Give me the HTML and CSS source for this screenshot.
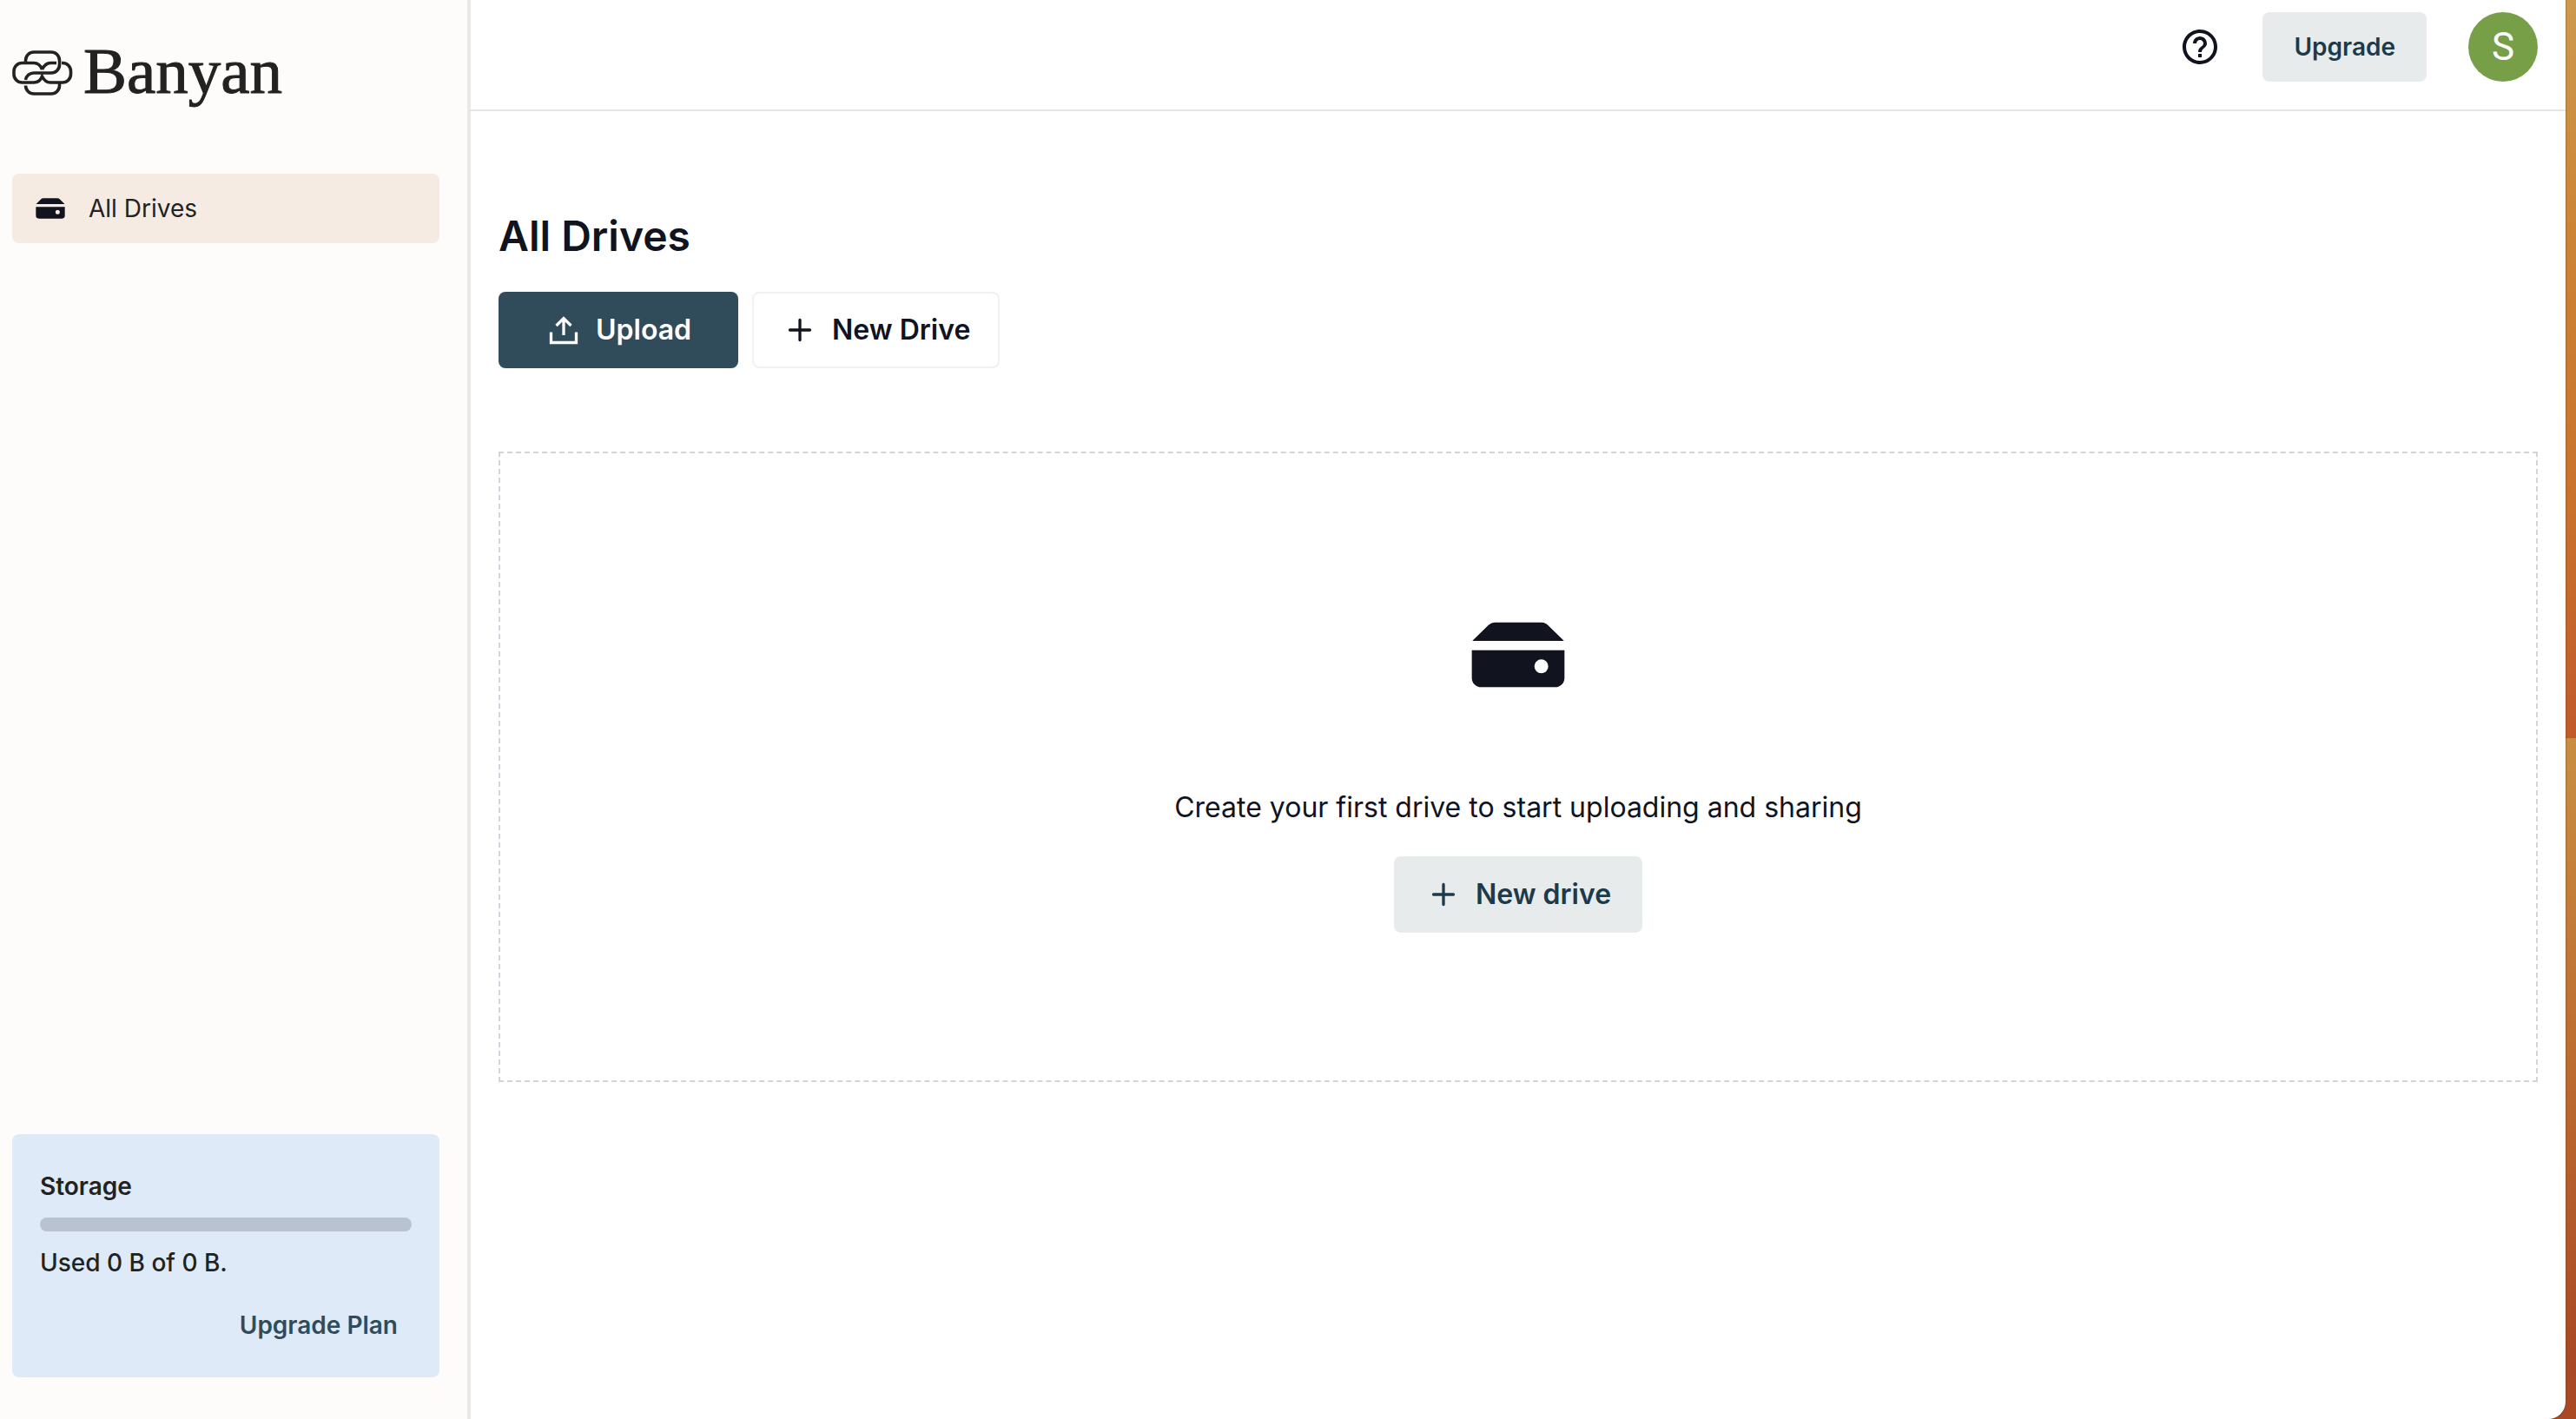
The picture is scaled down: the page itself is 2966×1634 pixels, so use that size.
FILE: index.html
```html
<!DOCTYPE html>
<html lang="en">
<head>
<meta charset="utf-8">
<title>Banyan - All Drives</title>
<link rel="stylesheet" href="styles.css">
</head>
<body>
<svg class="sprite" aria-hidden="true">
  <symbol id="drive" viewBox="0 0 24 24">
    <path fill="currentColor" d="M2.1 9 5.6 5.6Q6.2 5 7 5H17Q17.8 5 18.4 5.6L21.9 9Z"/>
    <path fill="currentColor" fill-rule="evenodd" d="M2 11H22V17A2 2 0 0 1 20 19H4A2 2 0 0 1 2 17ZM17 13A1.5 1.5 0 0 0 17 16 1.5 1.5 0 0 0 17 13Z"/>
  </symbol>
  <symbol id="plus" viewBox="0 0 40 40">
    <path fill="none" stroke="currentColor" stroke-width="3.3" stroke-linecap="round" d="M21 8.500V31.500M9.500 20H32.500"/>
  </symbol>
</svg>
<div class="window">
  <aside class="sidebar">
    <a class="logo" href="#">
      <svg class="logo-mark" viewBox="0 0 70 52" aria-hidden="true">
        <g fill="none" stroke="currentColor" stroke-width="3.6">
          <path d="M15.500 13V11.500A9.500 9.500 0 0 1 25 2H45A9.500 9.500 0 0 1 54.500 11.500V16.500A9.500 9.500 0 0 1 45 26H25A9.500 9.500 0 0 0 15.500 34"/>
          <path d="M34.500 22C32.500 17 30 14.500 25 14.500H11.500A9.500 9.500 0 0 0 2 24V27.500A9.500 9.500 0 0 0 11.500 37H25C30 37 32.500 35 34.500 30 37 35 39.500 37 44 37H58A9.500 9.500 0 0 0 67.500 27.500V24A9.500 9.500 0 0 0 58 14.500H57M51 14.500H44C39.500 14.500 37 17 34.500 22"/>
          <path d="M15.500 40.500A9.500 9.500 0 0 0 25 50H45A9.500 9.500 0 0 0 54.500 40.500V38"/>
        </g>
      </svg>
      <span>Banyan</span>
    </a>
    <nav>
      <a class="nav-item" href="#"><svg class="icon"><use href="#drive"/></svg>All Drives</a>
    </nav>
    <section class="storage">
      <h2>Storage</h2>
      <div class="meter" role="progressbar" aria-label="Storage used" aria-valuenow="0"></div>
      <p>Used 0 B of 0 B.</p>
      <a href="#">Upgrade Plan</a>
    </section>
  </aside>
  <div class="content">
    <header class="topbar">
      <button class="help" aria-label="Help">
        <svg viewBox="0 0 24 24" aria-hidden="true"><path fill="currentColor" d="M11 18h2v-2h-2v2zm1-16C6.480 2 2 6.480 2 12s4.480 10 10 10 10-4.480 10-10S17.520 2 12 2zm0 18c-4.410 0-8-3.590-8-8s3.590-8 8-8 8 3.590 8 8-3.590 8-8 8zm0-14c-2.210 0-4 1.790-4 4h2c0-1.100.9-2 2-2s2 .9 2 2c0 2-3 1.750-3 5h2c0-2.250 3-2.500 3-5 0-2.210-1.790-4-4-4z"/></svg>
      </button>
      <button class="upgrade">Upgrade</button>
      <button class="avatar" aria-label="Account">S</button>
    </header>
    <main>
      <h1>All Drives</h1>
      <div class="actions">
        <button class="btn primary">
          <svg class="icon" viewBox="0 0 40 40" aria-hidden="true"><path fill="none" stroke="currentColor" stroke-width="3.3" d="M6.500 22.500V34.500H35.500V22.500M21 26V6.500M12.500 15 21 6.500 29.500 15"/></svg>
          Upload
        </button>
        <button class="btn outline"><svg class="icon"><use href="#plus"/></svg>New Drive</button>
      </div>
      <section class="empty">
        <svg class="empty-icon"><use href="#drive"/></svg>
        <p>Create your first drive to start uploading and sharing</p>
        <button class="btn soft"><svg class="icon"><use href="#plus"/></svg>New drive</button>
      </section>
    </main>
  </div>
</div>
</body>
</html>
```
FILE: styles.css
```css
* { box-sizing: border-box; margin: 0; }

body {
  background:
    linear-gradient(to bottom, #cc9a50 0, #cd8435 16%, #c9712d 36%, #c25a2c 52%, transparent 52%),
    linear-gradient(to bottom, #c98e42 52%, #bd6c31 75%, #a94825 96%, #a94a25 100%);
  font-family: Inter, "Liberation Sans", sans-serif;
  font-size: 28px;
  line-height: 40px;
  color: #11131f;
}

button { border: 0; padding: 0; font: inherit; color: inherit; background: none; cursor: pointer; }
a { color: inherit; text-decoration: none; }
svg { display: block; flex: none; }

.sprite { position: absolute; width: 0; height: 0; }
.icon { width: 40px; height: 40px; }

.window {
  display: flex;
  min-height: 100vh;
  margin-right: 12px;
  background: #fff;
  border-radius: 0 0 20px 0;
  box-shadow: 0 0 2px #5a3a14;
  overflow: hidden;
}

.sidebar {
  display: flex;
  flex-direction: column;
  flex: none;
  width: 542px;
  padding: 48px 32px 48px 14px;
  border-right: 4px solid #e8e8e8;
  background: #fdfcfa;
  color: #222;
}

.logo {
  display: flex;
  align-items: center;
  gap: 12px;
  height: 72px;
  margin-bottom: 80px;
  font-family: "Liberation Serif", serif;
  font-size: 75px;
  line-height: 68px;
  -webkit-text-stroke: 1px currentColor;
}
.logo span { height: 72px; }
.logo-mark { width: 70px; height: 52px; }

.nav-item {
  display: flex;
  align-items: center;
  gap: 24px;
  height: 80px;
  padding: 0 24px;
  border-radius: 8px;
  background: #f5ebe3;
}
.nav-item .icon { color: #11131f; }

.storage {
  display: flex;
  flex-direction: column;
  height: 280px;
  margin-top: auto;
  padding: 40px 32px;
  border-radius: 8px;
  background: #deeaf8;
}
.storage h2 { font-size: 28px; font-weight: 600; }
.storage p { margin-bottom: 32px; font-weight: 500; }
.storage a { align-self: flex-end; margin-right: 16px; font-weight: 600; color: #304b5a; }
.meter { height: 16px; margin: 16px 0; flex: none; border-radius: 8px; background: #b9c2d0; }

.content { flex: 1; min-width: 0; }

.topbar {
  display: flex;
  align-items: center;
  justify-content: flex-end;
  gap: 48px;
  height: 128px;
  padding: 0 32px 18px;
  border-bottom: 2px solid #e5e5e5;
}
.help svg { width: 48px; height: 48px; }
.upgrade {
  height: 80px;
  padding: 0 36px;
  border-radius: 8px;
  background: #e7ebec;
  font-weight: 600;
  color: #1c3a4a;
}
.avatar {
  width: 80px;
  height: 80px;
  border-radius: 50%;
  background: #769f48;
  font-family: Roboto, sans-serif;
  font-size: 44px;
  color: #fff;
}

main { padding: 112px 32px; }
h1 { font-size: 48px; font-weight: 600; line-height: 64px; }

.actions { display: flex; gap: 16px; margin: 32px 0 96px; }
.btn {
  display: flex;
  align-items: center;
  gap: 18px;
  height: 88px;
  padding: 0 36px;
  border-radius: 8px;
  font-size: 32px;
  font-weight: 600;
}
.primary { padding: 0 54px; background: #304b5a; color: #fff; }
.outline { padding: 0 32px; border: 2px solid #f0f0f5; }
.soft { background: #e7ebec; color: #1c3a4a; }

.empty {
  display: flex;
  flex-direction: column;
  align-items: center;
  height: 726px;
  padding: 168px 32px;
  border: 2px dashed #d0d5dd;
}
.empty-icon { width: 128px; height: 128px; }
.empty p { margin: 92px 0 36px; font-size: 32px; }
```
